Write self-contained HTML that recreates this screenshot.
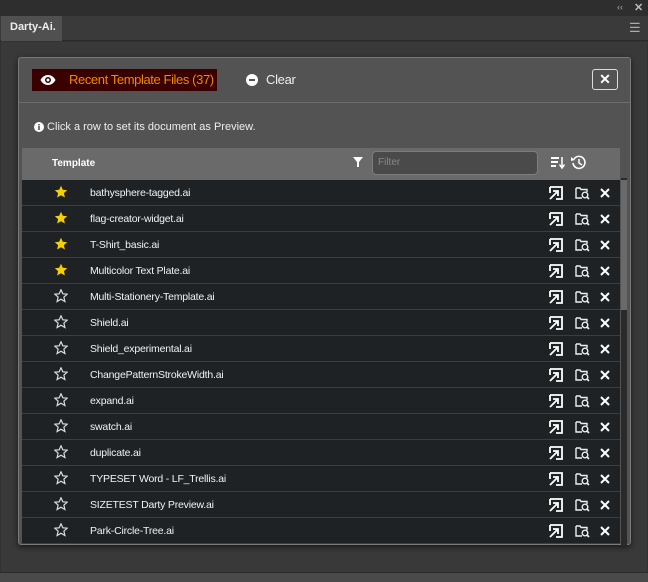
<!DOCTYPE html>
<html><head><meta charset="utf-8"><style>
*{box-sizing:border-box;margin:0;padding:0}
body{width:648px;height:582px;overflow:hidden;background:#333;font-family:"Liberation Sans",sans-serif;position:relative}
.top{position:absolute;left:0;top:0;width:648px;height:16px;background:#2e2e2e}
.tabbar{position:absolute;left:0;top:16px;width:648px;height:25px;background:#3a3a3a;border-bottom:1px solid #2a2a2a}
.tab{position:absolute;left:1px;top:0;width:61px;height:25px;background:#505050;color:#eee;font-size:11px;font-weight:bold;line-height:22px;padding-left:9px}
.panel{position:absolute;left:1px;top:42px;width:646px;height:530px;background:#393939}
.status{position:absolute;left:0;top:572px;width:648px;height:10px;background:#4a4a4a;border-top:1px solid #2a2a2a}
.modal{position:absolute;left:18px;top:57px;width:613px;height:488px;background:#535353;border:1px solid #7a7a7a;border-radius:3px;box-shadow:0 2px 6px rgba(0,0,0,.6)}
.hdr{position:absolute;left:0;top:0;width:100%;height:45px;border-bottom:1px solid #6e6e6e}
.rtf{position:absolute;left:13px;top:11px;width:185px;height:22px;background:#3a0000;color:#f08a00;font-size:13px;line-height:22px;padding-left:37px;white-space:nowrap;letter-spacing:-0.4px}
.clear{position:absolute;left:227px;top:11px;color:#eee;font-size:13px;line-height:22px;padding-left:20px;letter-spacing:-0.3px}
.xbtn{position:absolute;left:573px;top:11px;width:26px;height:21px;border:1px solid #ddd;border-radius:3px;color:#fff;font-size:14px;text-align:center;line-height:19px;font-weight:bold}
.info{position:absolute;left:15px;top:63px;color:#eee;font-size:11px}
.tbl{position:absolute;left:3px;top:90px;width:598px;height:396px;background:#1e2225;overflow:hidden}
.th{position:absolute;left:0;top:0;width:598px;height:32px;background:#6a6a6a}
.th .t{position:absolute;left:30px;top:10px;color:#fff;font-size:10px;font-weight:bold}
.filter{position:absolute;left:350px;top:3px;width:166px;height:24px;background:#4a4a4a;border:1px solid #7d7d7d;border-radius:4px;color:#888;font-size:10px;line-height:22px;padding-left:5px}
.row{position:absolute;left:0;width:598px;height:26px;border-bottom:1px solid #3b3e41;background:#1e2225}
.row .n{position:absolute;left:68px;top:7px;color:#f2f2f2;font-size:10.5px;letter-spacing:-0.2px}
.row svg{position:absolute;top:6px}
.sb{position:absolute;left:602px;top:120px;width:6px;height:368px;background:#2a2a2a}
.sbt{position:absolute;left:602px;top:122px;width:6px;height:130px;background:#6a6a6a}
</style></head><body>
<div class="top"><span style="position:absolute;left:617px;top:2px;color:#aaa;font-size:9px">‹‹</span><span style="position:absolute;left:634px;top:1px;color:#bbb;font-size:11px;font-weight:bold">✕</span></div>
<div class="tabbar"><div class="tab">Darty-Ai.</div><span style="position:absolute;left:629px;top:4px;color:#aaa;font-size:13px">☰</span></div>
<div class="panel"></div>
<div class="status"></div>
<div class="modal">
 <div class="hdr">
  <div class="rtf"><svg style="position:absolute;left:8px;top:5px" width="16" height="12" viewBox="0 0 16 12"><path d="M8 1C4 1 1.5 4 0.5 6 1.5 8 4 11 8 11s6.5-3 7.5-5C14.5 4 12 1 8 1z" fill="#fff"/><circle cx="8" cy="6" r="3" fill="#3a0000"/><circle cx="8" cy="6" r="1.5" fill="#fff"/></svg>Recent Template Files (37)</div>
  <div class="clear"><svg style="position:absolute;left:0;top:5px" width="12" height="12"><circle cx="6" cy="6" r="6" fill="#fff"/><rect x="3" y="5" width="6" height="2" fill="#535353"/></svg>Clear</div>
  <div class="xbtn">✕</div>
 </div>
 <div class="info"><svg style="vertical-align:-2px" width="10" height="10"><circle cx="5" cy="5" r="5" fill="#fff"/><rect x="4.2" y="4" width="1.6" height="4" fill="#535353"/><rect x="4.2" y="2" width="1.6" height="1.4" fill="#535353"/></svg> Click a row to set its document as Preview.</div>
 <div class="tbl">
  <div class="th"><span class="t">Template</span>
   <svg style="position:absolute;left:331px;top:9px" width="10" height="10"><path d="M0 0h10L6 5v5H4V5z" fill="#fff"/></svg>
   <div class="filter">Filter</div>
   <svg style="position:absolute;left:529px;top:9px" width="14" height="12"><path d="M0 1h8M0 5h7M0 9h5" stroke="#fff" stroke-width="2"/><path d="M11 0v10M8.5 7.5L11 11l2.5-3.5" stroke="#fff" stroke-width="1.5" fill="none"/></svg>
   <svg style="position:absolute;left:549px;top:7px" width="15" height="15"><path d="M3 4A6 6 0 1 1 2 8" stroke="#fff" stroke-width="1.6" fill="none"/><path d="M0 2l4 3-4 1z" fill="#fff"/><path d="M8 4v4l3 2" stroke="#fff" stroke-width="1.5" fill="none"/></svg>
  </div>
 </div>
 <div class="sb"></div><div class="sbt"></div>
</div>
<script>
var names=["bathysphere-tagged.ai","flag-creator-widget.ai","T-Shirt_basic.ai","Multicolor Text Plate.ai","Multi-Stationery-Template.ai","Shield.ai","Shield_experimental.ai","ChangePatternStrokeWidth.ai","expand.ai","swatch.ai","duplicate.ai","TYPESET Word - LF_Trellis.ai","SIZETEST Darty Preview.ai","Park-Circle-Tree.ai"];
var t=document.querySelector('.tbl'),h='';
var sp="M7 0.8L8.8 4.8 13.2 5.2 9.9 8.1 10.9 12.5 7 10.2 3.1 12.5 4.1 8.1 0.8 5.2 5.2 4.8Z";
names.forEach(function(n,i){
 var star=i<4?'<svg style="left:32px;top:5px" width="14" height="14"><path d="'+sp+'" fill="#f5d000"/></svg>':'<svg style="left:32px;top:5px" width="14" height="14"><path d="'+sp+'" fill="none" stroke="#ddd" stroke-width="1.2"/></svg>';
 h+='<div class="row" style="top:'+(32+i*26)+'px">'+star+'<span class="n">'+n+'</span>'+
 '<svg style="left:527px" width="14" height="14" viewBox="0 0 14 14"><path d="M1 1h12v12H7M1 1v6" stroke="#fff" stroke-width="1.8" fill="none"/><path d="M4 5h5v5M9 5L1 13" stroke="#fff" stroke-width="1.8" fill="none"/></svg>'+
 '<svg style="left:553px" width="15" height="14" viewBox="0 0 15 14"><path d="M1 2h4l1 1.5h6V6M1 2v10h6" stroke="#eee" stroke-width="1.4" fill="none"/><circle cx="10" cy="9" r="2.8" stroke="#eee" stroke-width="1.4" fill="none"/><path d="M12 11l2 2" stroke="#eee" stroke-width="1.6"/></svg>'+
 '<svg style="left:578px;top:8px" width="10" height="10"><path d="M1 1l8 8M9 1L1 9" stroke="#fff" stroke-width="2"/></svg></div>';
});
t.insertAdjacentHTML('beforeend',h);
</script>
</body></html>
